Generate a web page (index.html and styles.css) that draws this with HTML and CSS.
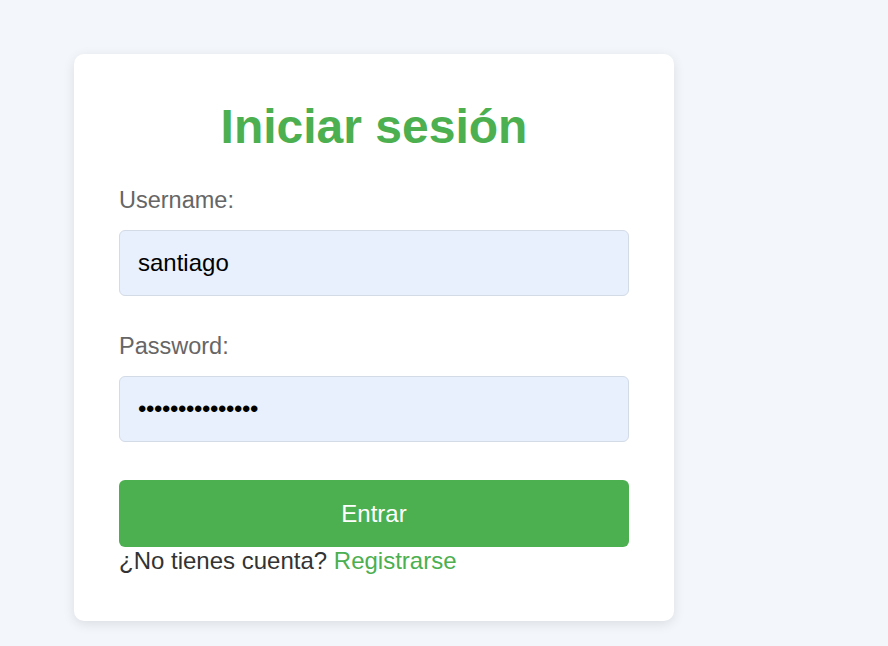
FILE: index.html
```html
<!DOCTYPE html>
<html lang="es">
<head>
<meta charset="utf-8">
<title>Iniciar sesión</title>
<link rel="stylesheet" href="styles.css">
</head>
<body>
<div class="card">
  <h2 class="title">Iniciar sesión</h2>
  <form class="form">
    <label class="label" for="u">Username:</label>
    <input class="field" id="u" type="text" value="santiago">
    <label class="label" for="p">Password:</label>
    <input class="field field-pass" id="p" type="password" value="santiago1234567">
    <button class="btn" type="button">Entrar</button>
  </form>
  <p class="foot">¿No tienes cuenta? <a class="link" href="#">Registrarse</a></p>
</div>
</body>
</html>
```

FILE: styles.css
```css
html, body {
  margin: 0;
  padding: 0;
}
body {
  background: #f3f6fb;
  font-family: "Liberation Sans", Arial, sans-serif;
  padding: 54px 0 0 74px;
  min-height: 646px;
  box-sizing: border-box;
}
.card {
  width: 600px;
  box-sizing: border-box;
  background: #fff;
  border-radius: 10px;
  box-shadow: 0 3px 12px rgba(0, 0, 0, 0.1);
  padding: 45px 45px 47px;
}
.title {
  margin: 0 0 33px;
  text-align: center;
  color: #4caf50;
  font-size: 48px;
  font-weight: bold;
  line-height: 55px;
}
.form {
  display: flex;
  flex-direction: column;
  margin: 0;
}
.label {
  display: block;
  color: #666;
  font-size: 23.5px;
  line-height: 27px;
  margin-bottom: 16px;
}
.field {
  display: block;
  box-sizing: border-box;
  width: 100%;
  height: 66px;
  margin: 0 0 37px;
  padding: 0 18px;
  border: 1px solid #d3dbe6;
  border-radius: 6px;
  background: #e8f0fe;
  color: #000;
  font-family: "Liberation Sans", Arial, sans-serif;
  font-size: 24px;
  outline: none;
}
.field-pass {
  margin-bottom: 38px;
  letter-spacing: -0.4px;
}
.btn {
  display: block;
  width: 100%;
  height: 67px;
  border: 0;
  border-radius: 6px;
  background: #4caf50;
  color: #fff;
  font-family: "Liberation Sans", Arial, sans-serif;
  font-size: 24px;
  padding: 0;
  cursor: pointer;
}
.foot {
  margin: 0;
  color: #333;
  font-size: 24px;
  line-height: 27px;
}
.link {
  color: #4caf50;
  text-decoration: none;
}
```
